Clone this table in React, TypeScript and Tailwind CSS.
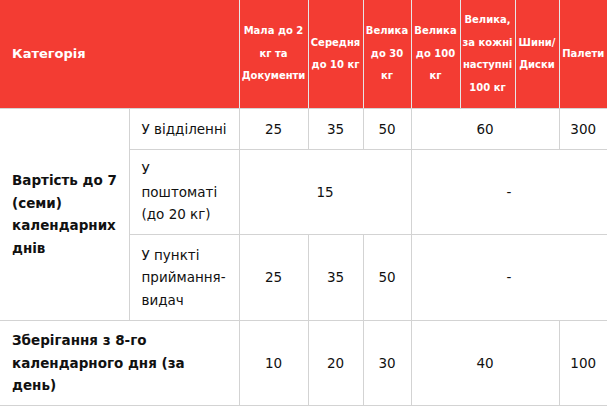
import React from 'react'

const th = 'bg-[#f33c33] text-white font-bold text-[10px] leading-[22.5px] px-[2px] py-[9px] text-center align-middle whitespace-nowrap border-b border-b-[#d4d4d4]'
const thLine = 'border-r border-r-[#e6e6e6]'
const td = 'text-[13.5px] leading-[22.5px] py-[8.5px] align-middle border-b border-[#d3d3d3] text-[#111]'
const num = td + ' text-center border-r'
const label = td + ' px-3 border-r'

export default function App() {
    return (
        <div className="w-[607px] overflow-hidden bg-white" style={{ fontFamily: '"DejaVu Sans", Verdana, sans-serif' }}>
            <table className="table-fixed border-collapse w-[607px]">
                <colgroup>
                    <col className="w-[129px]" />
                    <col className="w-[110px]" />
                    <col className="w-[69px]" />
                    <col className="w-[55px]" />
                    <col className="w-[48px]" />
                    <col className="w-[49px]" />
                    <col className="w-[55px]" />
                    <col className="w-[44px]" />
                    <col className="w-[48px]" />
                </colgroup>
                <thead>
                    <tr>
                        <th colSpan={2} className={th + ' ' + thLine + ' !text-left !px-3 !text-[13px]'}>Категорія</th>
                        <th className={th + ' ' + thLine}>Мала до 2<br />кг та<br />Документи</th>
                        <th className={th + ' ' + thLine}>Середня<br />до 10 кг</th>
                        <th className={th + ' ' + thLine}>Велика<br />до 30<br />кг</th>
                        <th className={th + ' ' + thLine}>Велика<br />до 100<br />кг</th>
                        <th className={th + ' ' + thLine}>Велика,<br />за кожні<br />наступні<br />100 кг</th>
                        <th className={th + ' ' + thLine}>Шини/<br />Диски</th>
                        <th className={th}>Палети</th>
                    </tr>
                </thead>
                <tbody>
                    <tr>
                        <td rowSpan={3} className={label + ' font-bold whitespace-nowrap'}>Вартість до 7<br />(семи)<br />календарних<br />днів</td>
                        <td className={label}>У відділенні</td>
                        <td className={num}>25</td>
                        <td className={num}>35</td>
                        <td className={num}>50</td>
                        <td colSpan={3} className={num}>60</td>
                        <td className={td + ' text-center'}>300</td>
                    </tr>
                    <tr>
                        <td className={label}>У<br />поштоматі<br />(до 20 кг)</td>
                        <td colSpan={3} className={num}>15</td>
                        <td colSpan={4} className={num}>-</td>
                    </tr>
                    <tr>
                        <td className={label}>У пункті приймання-видач</td>
                        <td className={num}>25</td>
                        <td className={num}>35</td>
                        <td className={num}>50</td>
                        <td colSpan={4} className={num}>-</td>
                    </tr>
                    <tr>
                        <td colSpan={2} className={label + ' font-bold'}>Зберігання з 8-го<br />календарного дня (за<br />день)</td>
                        <td className={num}>10</td>
                        <td className={num}>20</td>
                        <td className={num}>30</td>
                        <td colSpan={3} className={num}>40</td>
                        <td className={td + ' text-center'}>100</td>
                    </tr>
                </tbody>
            </table>
        </div>
    )
}
